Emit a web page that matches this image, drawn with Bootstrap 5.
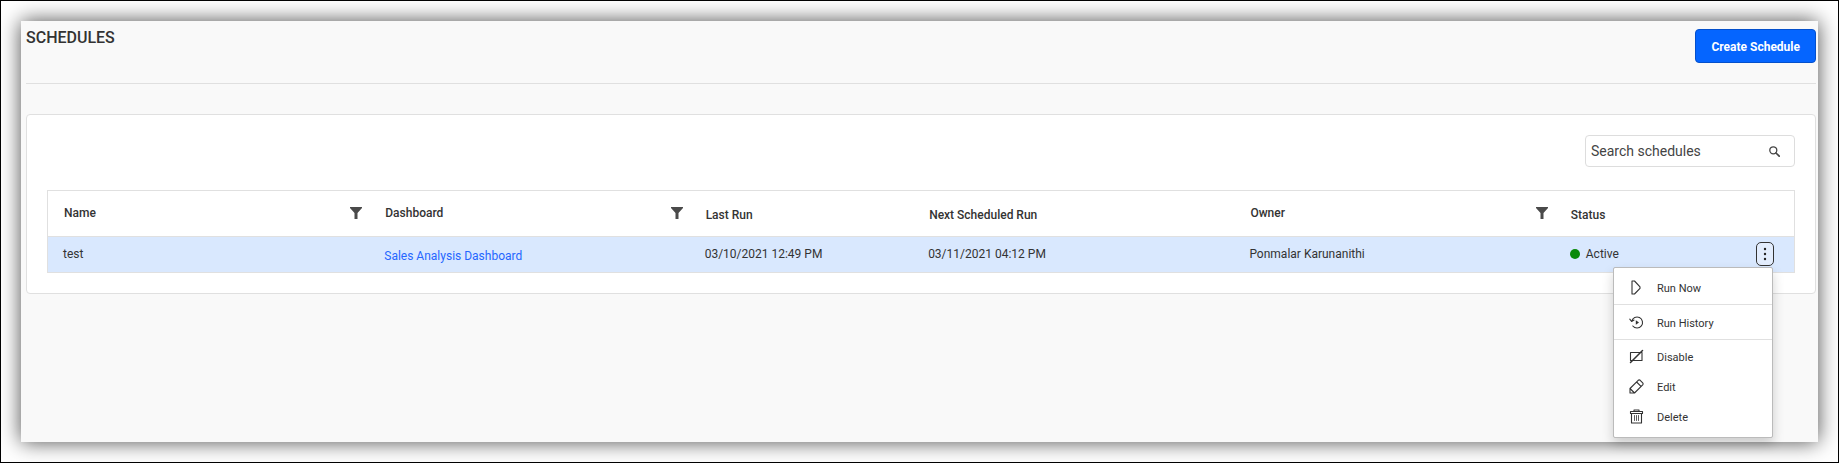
<!DOCTYPE html>
<html lang="en">
<head>
<meta charset="utf-8">
<meta name="viewport" content="width=device-width, initial-scale=1">
<title>Schedules</title>
<link href="https://cdn.jsdelivr.net/npm/bootstrap@5.3.0/dist/css/bootstrap.min.css" rel="stylesheet">
<style>
  body { font-family: Roboto, "Liberation Sans", sans-serif; font-size: 12px; line-height: 18px; color: #333; background: #fff; }
  .app-frame { border: 1px solid #000; padding: 20px; }
  .app-panel { background: #f9f9f9; padding: 0 2px 0 5px; box-shadow: 0 0 20px rgba(0, 0, 0, .7); }
  .page-head { height: 63px; padding-top: 8px; border-bottom: 1px solid #e0e0e0; }
  .page-title { font-size: 16px; line-height: 18px; font-weight: 500; color: #333; }
  .btn-create { --bs-btn-bg: #0565ff; --bs-btn-border-color: #0450cc; --bs-btn-color: #fff; --bs-btn-hover-bg: #0450cc; --bs-btn-hover-color: #fff;
    height: 34px; padding: 2px 15px 0; font-size: 12px; font-weight: 700; border-radius: 4px; white-space: nowrap; }
  .list-card { margin-top: 30px; border: 1px solid #e0e0e0; border-radius: 4px; background: #fff; padding: 20px; }
  .search-box { width: 210px; height: 32px; border: 1px solid #ddd; border-radius: 4px; background: #fff; }
  .search-box input { min-width: 0; font-size: 14px; color: #444; padding: 0 0 0 5px; border: 0; background: none; outline: 0; }
  .search-box input::placeholder { color: #444; opacity: 1; }
  .search-box button { border: 0; background: none; padding: 0 14px 0 0; line-height: 0; }
  .grid-table { margin: 23px 0 0; table-layout: fixed; border: 1px solid #e0e0e0; border-collapse: separate; border-spacing: 0; width: 100%; }
  .grid-table th { height: 46px; padding: 3px 7px 0 16px; font-weight: 500; border-bottom: 1px solid #e0e0e0; white-space: nowrap; }
  .grid-table td { height: 35px; padding: 0 7px 1px 15px; background: #d9e8fe; white-space: nowrap; }
  .grid-table td.with-link { padding-top: 3px; }
  .grid-table td a { color: #2566ff; text-decoration: none; }
  .head-filter { padding-bottom: 4px; }
  .head-filter button { border: 0; background: none; padding: 0; line-height: 0; }
  .col-name, .col-next { width: 18.4%; }
  .col-board, .col-owner { width: 18.35%; }
  .col-last { width: 12.8%; }
  .status-dot { width: 10px; height: 10px; border-radius: 50%; background: #0a8a0a; }
  .status-label { gap: 6px; }
  .grid-table td.status-cell { padding-right: 20px; }
  .btn-more { width: 18px; height: 24px; padding: 0; border: 1px solid #333; border-radius: 5px; background: #e3edfd; line-height: 0; display: flex; align-items: center; justify-content: center; }
  .row-menu { right: 1px; top: 25px; min-width: 0; width: 160px; padding: 2px 0 4px; border: 1px solid #bbb; border-radius: 2px; box-shadow: 0 6px 12px rgba(0, 0, 0, .18); }
  .row-menu .dropdown-item { display: flex; align-items: center; gap: 13px; height: 30px; padding: 0 15px; font-size: 11px; font-weight: 400; color: #333; }
  .row-menu .dropdown-item svg { margin-bottom: 4px; }
  .row-menu .menu-main { height: 35px; padding-top: 4px; margin-bottom: 3px; border-bottom: 1px solid #e0e0e0; }
  .row-menu .menu-first { height: 35px; padding-top: 4px; border-bottom: 1px solid #e0e0e0; }
  .page-space { height: 148px; }
  .stroke { fill: none; stroke: #333; stroke-width: 1.1; stroke-linejoin: round; stroke-linecap: round; }
</style>
</head>
<body>
<svg width="0" height="0" class="d-none" aria-hidden="true">
  <symbol id="funnel" viewBox="0 0 12 12"><path d="M0 0h12v1L7.500 6v6h-3V6L0 1z" fill="#4a4a4a"/></symbol>
</svg>
<div class="app-frame">
  <main class="app-panel">
    <header class="page-head d-flex justify-content-between align-items-start">
      <h1 class="page-title m-0">SCHEDULES</h1>
      <button type="button" class="btn btn-create">Create Schedule</button>
    </header>

    <section class="list-card">
      <div class="d-flex justify-content-end">
        <form class="search-box d-flex align-items-center" role="search">
          <input type="text" class="flex-grow-1" placeholder="Search schedules" aria-label="Search schedules">
          <button type="button" aria-label="Search"><svg width="11" height="11" viewBox="0 0 11 11"><circle cx="4.3" cy="4.3" r="3.5" fill="none" stroke="#444" stroke-width="1.3"/><path d="M7 7l3.2 3.2" stroke="#444" stroke-width="1.7" stroke-linecap="round"/></svg></button>
        </form>
      </div>

      <table class="grid-table">
        <colgroup><col class="col-name"><col class="col-board"><col class="col-last"><col class="col-next"><col class="col-owner"><col></colgroup>
        <thead>
          <tr>
            <th scope="col"><div class="head-filter d-flex justify-content-between align-items-center">Name<button type="button" aria-label="Filter by name"><svg width="12" height="12"><use href="#funnel"/></svg></button></div></th>
            <th scope="col"><div class="head-filter d-flex justify-content-between align-items-center">Dashboard<button type="button" aria-label="Filter by dashboard"><svg width="12" height="12"><use href="#funnel"/></svg></button></div></th>
            <th scope="col">Last Run</th>
            <th scope="col">Next Scheduled Run</th>
            <th scope="col"><div class="head-filter d-flex justify-content-between align-items-center">Owner<button type="button" aria-label="Filter by owner"><svg width="12" height="12"><use href="#funnel"/></svg></button></div></th>
            <th scope="col">Status</th>
          </tr>
        </thead>
        <tbody>
          <tr>
            <td>test</td>
            <td class="with-link"><a href="#">Sales Analysis Dashboard</a></td>
            <td>03/10/2021 12:49 PM</td>
            <td>03/11/2021 04:12 PM</td>
            <td>Ponmalar Karunanithi</td>
            <td class="status-cell">
              <div class="d-flex justify-content-between align-items-center">
                <span class="status-label d-flex align-items-center"><span class="status-dot"></span>Active</span>
                <div class="dropdown">
                  <button type="button" class="btn-more" aria-label="Schedule actions" aria-expanded="true"><svg width="4" height="14" viewBox="0 0 4 14" fill="#222"><circle cx="2" cy="2" r="1.2"/><circle cx="2" cy="7" r="1.2"/><circle cx="2" cy="12" r="1.2"/></svg></button>
                  <div class="dropdown-menu row-menu show">
                    <a class="dropdown-item menu-first" href="#"><svg width="15" height="15" viewBox="0 0 15 15" class="stroke"><path d="M3 1v13h2.500l5.500-5.600V6.800L5.500 1z"/></svg>Run Now</a>
                    <a class="dropdown-item menu-main" href="#"><svg width="15" height="15" viewBox="0 0 15 15" class="stroke"><path d="M2.700 6.200A5.500 5.500 0 1 1 3.800 11M.8 4.200l1.800 2.300L5 5"/><path d="M6.800 5.200v4.600l3.200-2.300z" fill="#333" stroke="none"/></svg>Run History</a>
                    <a class="dropdown-item" href="#"><svg width="15" height="15" viewBox="0 0 15 15" class="stroke"><path d="M1.500 3.500h11.500v8H1.500z"/><path d="M1.500 13.500L13.500 1.500" stroke-width="1.500"/></svg>Disable</a>
                    <a class="dropdown-item" href="#"><svg width="15" height="15" viewBox="0 0 15 15" class="stroke"><path d="M1 14V9.500L9.200 1.300q1-.8 2 0l2.500 2.500q.8 1 0 2L5.500 14zM1 9.500L5.500 14M7.600 3l4.400 4.400"/></svg>Edit</a>
                    <a class="dropdown-item" href="#"><svg width="15" height="15" viewBox="0 0 15 15" class="stroke"><path d="M1.500 2.500h12v2h-12zM5 2.500V1h5v1.500M2.500 4.500V14h10V4.500"/><path d="M5.500 6.500v5M7.500 6.500v5M9.500 6.500v5" stroke-width=".8"/></svg>Delete</a>
                  </div>
                </div>
              </div>
            </td>
          </tr>
        </tbody>
      </table>
    </section>
    <div class="page-space"></div>
  </main>
</div>
<script src="https://cdn.jsdelivr.net/npm/bootstrap@5.3.0/dist/js/bootstrap.bundle.min.js"></script>
</body>
</html>
